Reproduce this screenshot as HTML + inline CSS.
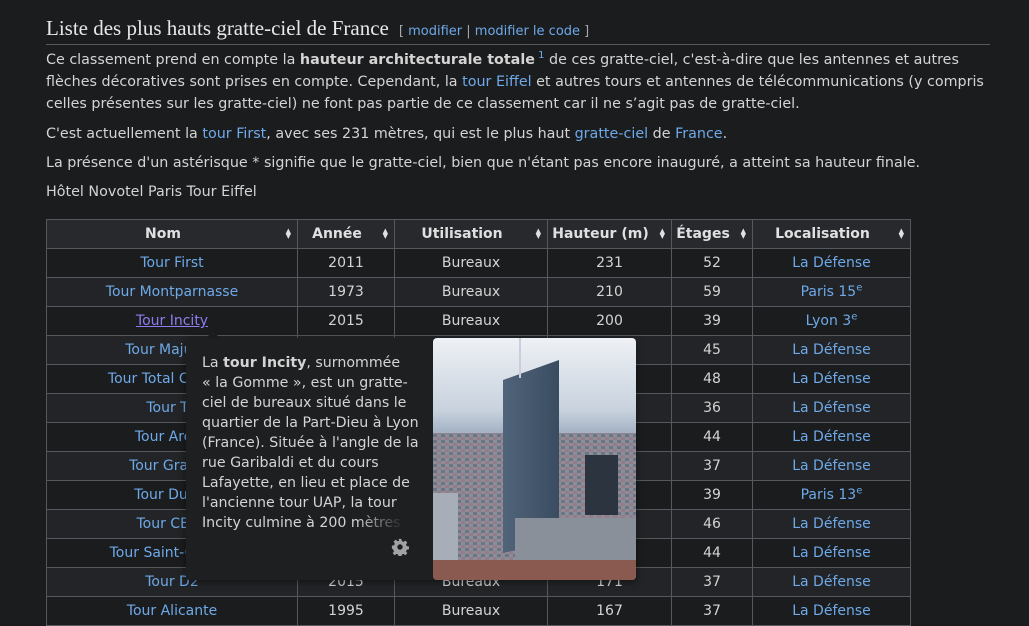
<!DOCTYPE html>
<html><head><meta charset="utf-8"><style>
body{margin:0;background:#1b1c1e;color:#d8d8d8;font-family:"DejaVu Sans","Liberation Sans",sans-serif;width:1029px;height:614px;overflow:hidden;position:relative}
a{color:#6ea9e8;text-decoration:none}
h2{position:absolute;left:46px;top:16px;margin:0;width:944px;border-bottom:1px solid #54595d;font-family:"Liberation Serif",serif;font-weight:normal;font-size:21px;color:#e8e8e8;padding-bottom:0;line-height:24px}
h2 span{font-family:"DejaVu Sans",sans-serif;font-size:13px;color:#a2a9b1;margin-left:10px}
p{position:absolute;left:46px;margin:0;font-size:14.3px;line-height:22px;width:940px;color:#d4d4d4}
sup{font-size:10px;line-height:0}
table{position:absolute;left:46px;top:219px;border-collapse:collapse;font-size:14px}
td,th{border:1px solid #54595d;height:28px;padding:0;text-align:center;color:#d4d4d4}
th{background:#27292d;font-weight:bold;position:relative;color:#e0e0e0;padding-right:18px}
th i{position:absolute;right:6px;top:9px;font-style:normal;font-size:7px;line-height:5px}
tr:nth-child(odd) td{background:#222427}
tr:nth-child(even) td{background:#1b1c1e}
.pop{position:absolute;left:186px;top:338px;width:450px;height:242px;background:#1e1f21;box-shadow:0 2px 8px rgba(0,0,0,.5);border-radius:3px}
.pop .t{position:absolute;left:16px;top:15px;width:240px;font-size:14.2px;line-height:20px;color:#d4d4d4;height:180px;overflow:hidden;white-space:nowrap}
.fade{position:absolute;left:170px;top:176px;width:60px;height:20px;background:linear-gradient(90deg,rgba(30,31,33,0),#1e1f21 80%)}
.notch{position:absolute;left:206px;top:331px;width:0;height:0;border-left:7px solid transparent;border-right:7px solid transparent;border-bottom:7px solid #1e1f21}
</style></head><body>
<h2>Liste des plus hauts gratte-ciel de France<span>[ <a>modifier</a> | <a>modifier le code</a> ]</span></h2>
<p style="top:49px">Ce classement prend en compte la <b>hauteur architecturale totale</b><sup><a> 1</a></sup> de ces gratte-ciel, c'est-à-dire que les antennes et autres flèches décoratives sont prises en compte. Cependant, la <a>tour Eiffel</a> et autres tours et antennes de télécommunications (y compris celles présentes sur les gratte-ciel) ne font pas partie de ce classement car il ne s’agit pas de gratte-ciel.</p>
<p style="top:123px">C'est actuellement la <a>tour First</a>, avec ses 231 mètres, qui est le plus haut <a>gratte-ciel</a> de <a>France</a>.</p>
<p style="top:152px">La présence d'un astérisque * signifie que le gratte-ciel, bien que n'étant pas encore inauguré, a atteint sa hauteur finale.</p>
<p style="top:181px">Hôtel Novotel Paris Tour Eiffel</p>
<table>
<tr><th style="width:232px">Nom<i>▲<br>▼</i></th><th style="width:78px">Année<i>▲<br>▼</i></th><th style="width:134px">Utilisation<i>▲<br>▼</i></th><th style="width:105px">Hauteur (m)<i>▲<br>▼</i></th><th style="width:62px">Étages<i>▲<br>▼</i></th><th style="width:139px">Localisation<i>▲<br>▼</i></th></tr>
<tr><td><a>Tour First</a></td><td>2011</td><td>Bureaux</td><td>231</td><td>52</td><td><a>La Défense</a></td></tr>
<tr><td><a>Tour Montparnasse</a></td><td>1973</td><td>Bureaux</td><td>210</td><td>59</td><td><a>Paris 15<sup>e</sup></a></td></tr>
<tr><td><a style="color:#8c7ef0;text-decoration:underline">Tour Incity</a></td><td>2015</td><td>Bureaux</td><td>200</td><td>39</td><td><a>Lyon 3<sup>e</sup></a></td></tr>
<tr><td><a>Tour Majunga</a></td><td>2014</td><td>Bureaux</td><td>195</td><td>45</td><td><a>La Défense</a></td></tr>
<tr><td><a>Tour Total Coupole</a></td><td>1985</td><td>Bureaux</td><td>187</td><td>48</td><td><a>La Défense</a></td></tr>
<tr><td><a>Tour T1</a></td><td>2008</td><td>Bureaux</td><td>185</td><td>36</td><td><a>La Défense</a></td></tr>
<tr><td><a>Tour Areva</a></td><td>1974</td><td>Bureaux</td><td>184</td><td>44</td><td><a>La Défense</a></td></tr>
<tr><td><a>Tour Granite</a></td><td>2008</td><td>Bureaux</td><td>183</td><td>37</td><td><a>La Défense</a></td></tr>
<tr><td><a>Tour Duo 1</a></td><td>2021</td><td>Bureaux</td><td>180</td><td>39</td><td><a>Paris 13<sup>e</sup></a></td></tr>
<tr><td><a>Tour CB21</a></td><td>1974</td><td>Bureaux</td><td>179</td><td>46</td><td><a>La Défense</a></td></tr>
<tr><td><a>Tour Saint-Gobain</a></td><td>2019</td><td>Bureaux</td><td>178</td><td>44</td><td><a>La Défense</a></td></tr>
<tr><td><a>Tour D2</a></td><td>2015</td><td>Bureaux</td><td>171</td><td>37</td><td><a>La Défense</a></td></tr>
<tr><td><a>Tour Alicante</a></td><td>1995</td><td>Bureaux</td><td>167</td><td>37</td><td><a>La Défense</a></td></tr>
</table>
<div class="notch"></div>
<div class="pop">
<div class="t">La <b>tour Incity</b>, surnommée<br>« la Gomme », est un gratte-<br>ciel de bureaux situé dans le<br>quartier de la Part-Dieu à Lyon<br>(France). Située à l'angle de la<br>rue Garibaldi et du cours<br>Lafayette, en lieu et place de<br>l'ancienne tour UAP, la tour<br>Incity culmine à 200 mètres</div>
<div class="fade"></div>
<svg style="position:absolute;left:205px;top:200px" width="18" height="18" viewBox="0 0 20 20"><path fill="#a2a2a2" d="M8.5 1h3l.5 2.5 1.8.8 2.2-1.4 2.1 2.1-1.4 2.2.8 1.8 2.5.5v3l-2.5.5-.8 1.8 1.4 2.2-2.1 2.1-2.2-1.4-1.8.8-.5 2.5h-3l-.5-2.5-1.8-.8-2.2 1.4-2.1-2.1 1.4-2.2-.8-1.8L1 11.5v-3l2.5-.5.8-1.8-1.4-2.2 2.1-2.1 2.2 1.4L9 3.5zM10 7a3 3 0 100 6 3 3 0 000-6z"/></svg>
<svg style="position:absolute;left:247px;top:0" width="203" height="242" viewBox="0 0 203 242">
<defs><linearGradient id="sky" x1="0" y1="0" x2="0" y2="1"><stop offset="0" stop-color="#eef1f5"/><stop offset=".3" stop-color="#c8d2de"/><stop offset=".42" stop-color="#98a8bc"/><stop offset=".55" stop-color="#7a8aa0"/><stop offset="1" stop-color="#6a7080"/></linearGradient>
<linearGradient id="tw" x1="0" x2="1"><stop offset="0" stop-color="#50647a"/><stop offset="1" stop-color="#3a4c60"/></linearGradient>
<pattern id="city" width="8" height="6" patternUnits="userSpaceOnUse"><rect width="8" height="6" fill="#8a8e9a"/><rect width="4" height="3" fill="#6e7482"/><rect x="4" y="3" width="4" height="3" fill="#a0707a" opacity=".6"/></pattern>
<clipPath id="c"><rect width="203" height="242" rx="4"/></clipPath></defs>
<g clip-path="url(#c)">
<rect width="203" height="242" fill="url(#sky)"/>
<rect y="95" width="203" height="147" fill="url(#city)"/>
<rect x="0" y="155" width="25" height="70" fill="#a8aeb8"/>
<polygon points="70,42 126,22 126,202 70,215" fill="url(#tw)"/>
<rect x="86" y="0" width="2" height="40" fill="#ccd"/>
<rect x="152" y="117" width="33" height="60" fill="#2c3440"/>
<rect x="82" y="180" width="121" height="45" fill="#8a909a"/>
<rect x="0" y="222" width="203" height="20" fill="#8a5a50"/>
</g></svg>
</div>
</body></html>
